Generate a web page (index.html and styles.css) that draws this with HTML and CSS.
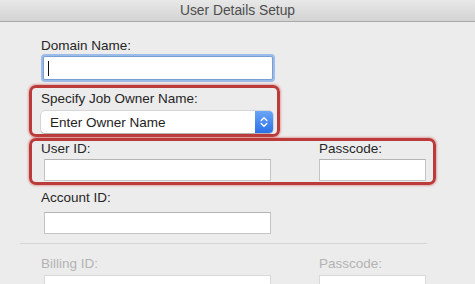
FILE: index.html
```html
<!DOCTYPE html>
<html>
<head>
<meta charset="utf-8">
<link rel="stylesheet" href="styles.css">
</head>
<body>
<div class="titlebar">User Details Setup</div>
<div class="content">
  <div class="field plain">
    <label class="lbl">Domain Name:</label>
    <div class="input focus"><span class="caret"></span></div>
  </div>

  <div class="hl hl-owner">
    <label class="lbl">Specify Job Owner Name:</label>
    <div class="select">
      <span class="sel-text">Enter Owner Name</span>
      <span class="stepper">
        <svg width="8" height="12" viewBox="0 0 8 12"><path d="M1.2 4.6 L4 1.8 L6.8 4.6 M1.2 7.4 L4 10.2 L6.8 7.4" fill="none" stroke="#fff" stroke-width="1.4" stroke-linecap="round" stroke-linejoin="round"/></svg>
      </span>
    </div>
  </div>

  <div class="hl hl-user">
    <div class="col col-user">
      <label class="lbl">User ID:</label>
      <div class="input"></div>
    </div>
    <div class="col col-pass">
      <label class="lbl">Passcode:</label>
      <div class="input"></div>
    </div>
  </div>

  <div class="field plain acct">
    <label class="lbl">Account ID:</label>
    <div class="input"></div>
  </div>

  <div class="sep"></div>

  <div class="row disabled">
    <div class="col col-bill">
      <label class="lbl">Billing ID:</label>
      <div class="input"></div>
    </div>
    <div class="col col-pass2">
      <label class="lbl">Passcode:</label>
      <div class="input"></div>
    </div>
  </div>
</div>
</body>
</html>
```

FILE: styles.css
```css
* { box-sizing: border-box; }
html, body { margin: 0; padding: 0; }
body {
  width: 475px;
  height: 284px;
  overflow: hidden;
  background: #ececec;
  font-family: "Liberation Sans", Arial, sans-serif;
  font-size: 13.5px;
  color: #262626;
}
.titlebar {
  height: 22px;
  background: linear-gradient(#e8e8e8, #d3d3d3);
  border-bottom: 1px solid #a9a9a9;
  text-align: center;
  line-height: 21px;
  color: #4d4d4d;
  font-size: 13.8px;
}
.content {
  padding-left: 29px;
  display: flex;
  flex-direction: column;
  height: 262px;
  overflow: hidden;
}
.lbl {
  display: block;
  line-height: 15px;
  height: 15px;
}
.input {
  background: #fff;
  border: 1px solid #c4c4c4;
  border-top-color: #b4b4b4;
  height: 22px;
}
.field.plain {
  padding-left: 12px;
  display: flex;
  flex-direction: column;
}
.field.plain:first-child { margin-top: 16px; }
.field.plain .input { width: 227px; margin-left: 3px; margin-top: 4px; }
.input.focus {
  width: 230px !important;
  height: 24px;
  margin-left: 2px !important;
  margin-top: 3px !important;
  border: 1px solid #7a9fd6;
  box-shadow: 0 0 0 2px #9bbbe8;
  border-radius: 2px;
  display: flex;
  align-items: center;
}
.caret {
  display: block;
  width: 1px;
  height: 15px;
  background: #111;
  margin-left: 4px;
}
.hl {
  border: 3px solid #bb3b3b;
  border-radius: 7px;
  box-shadow: 0 0 2px 1px rgba(214, 110, 110, 0.55);
  flex-shrink: 0;
}
.hl-owner {
  margin-top: 5px;
  width: 251px;
  padding: 3px 4px 1px 9px;
}
.select {
  margin-top: 5px;
  height: 22px;
  width: 232px;
  background: #fff;
  border-radius: 4px;
  box-shadow: 0 0 0 0.5px rgba(0,0,0,0.18), 0 1px 1px rgba(0,0,0,0.18);
  display: flex;
  align-items: center;
  justify-content: space-between;
}
.sel-text {
  padding-left: 9px;
  color: #222;
}
.stepper {
  width: 18px;
  height: 22px;
  border-radius: 0 4px 4px 0;
  background: linear-gradient(#6aa6f8, #2b6fe6);
  display: flex;
  align-items: center;
  justify-content: center;
}
.hl-user {
  width: 407px;
  margin-top: 1px;
  padding: 0 7px 1px 9px;
  display: flex;
  justify-content: space-between;
}
.col { display: flex; flex-direction: column; }
.col .input { margin-top: 3px; }
.col-user .input { width: 227px; margin-left: 3px; }
.col-pass .input { width: 107px; }
.acct { margin-top: 5px; flex-shrink: 0; }
.acct .input { margin-top: 7px !important; }
.sep {
  margin-top: 9px;
  margin-left: -9px;
  width: 407px;
  height: 1px;
  flex-shrink: 0;
  background: #d6d6d6;
}
.row {
  display: flex;
  justify-content: space-between;
  padding-left: 12px;
  width: 397px;
  margin-top: 12px;
  flex-shrink: 0;
}
.disabled .lbl { color: #b3b3b3; }
.disabled .input { border-color: #d9d9d9; margin-top: 4px; }
.col-bill .input { width: 227px; margin-left: 3px; }
.col-pass2 .input { width: 107px; }
```
